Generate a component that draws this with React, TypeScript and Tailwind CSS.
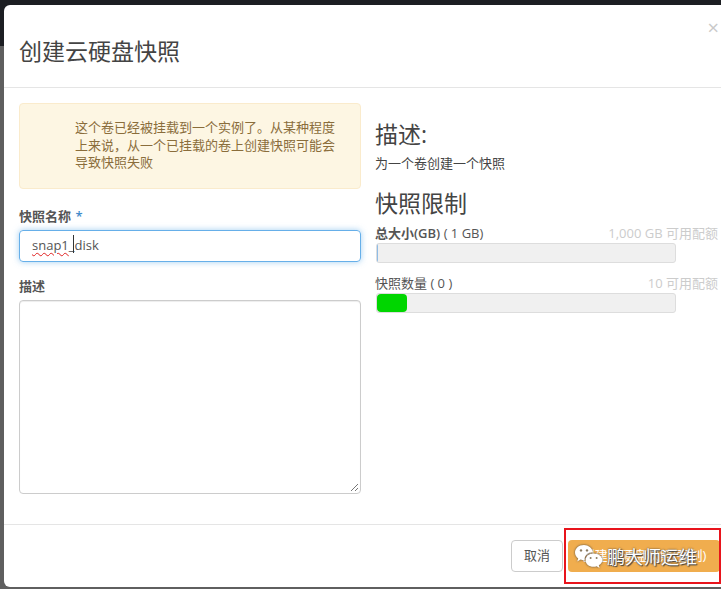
import React from "react";

const font = "font-['Open_Sans','Noto_Sans_CJK_SC',sans-serif]";

export default function App() {
  return (
    <div className={`relative h-[589px] w-[721px] overflow-hidden bg-[#5f5f5f] pt-[5px] pl-[4px] ${font}`}>
      <div className="absolute top-0 left-0 h-[46px] w-full bg-[#1c1e22]" />
      <div className="relative flex h-[582px] flex-col rounded-l-md bg-white text-[#444]">
        <Header />
        <div className="flex flex-1 gap-[15px] pt-[15px] pl-[15px]">
          <LeftForm />
          <RightInfo />
        </div>
        <Footer />
      </div>
      <Watermark />
    </div>
  );
}

const Header = () => {
  return (
    <div className="relative flex h-[83px] items-start border-b border-[#e5e5e5] pt-[28px] pl-[15px]">
      <h4 className="text-[23px] leading-[36px] text-[#444]">创建云硬盘快照</h4>
      <span className="absolute top-[11px] right-[2px] text-[20px] leading-[24px] text-[#c9c9c9]">×</span>
    </div>
  );
};

const LeftForm = () => {
  return (
    <div className="flex w-[342px] flex-col">
      <div className="h-[86px] rounded border border-[#faebcc] bg-[#fdf6e3] pt-[15px] pr-[20px] pl-[55px] text-[13px] leading-[17.5px] text-[#8a6d3b]">
        这个卷已经被挂载到一个实例了。从某种程度上来说，从一个已挂载的卷上创建快照可能会导致快照失败
      </div>
      <div className="mt-[18px] text-[13px] leading-[18px] font-semibold text-[#555]">
        快照名称 <span className="ml-[1px] text-[#428bca]">*</span>
      </div>
      <div className="mt-[5px] flex h-[32px] items-center rounded border border-[#66afe9] pl-[12px] text-[13px] text-[#555] shadow-[0_0_6px_rgba(102,175,233,0.6)]">
        <span className="underline decoration-[#e02020] decoration-wavy decoration-1 underline-offset-2">snap1</span>
        <span className="relative">
          _
          <span className="absolute top-[-1px] right-0 h-[18px] w-px bg-[#333]" />
        </span>
        <span>disk</span>
      </div>
      <div className="mt-[15px] text-[13px] leading-[18px] font-semibold text-[#555]">描述</div>
      <div className="relative mt-[5px] h-[194px] rounded border border-[#ccc] shadow-[inset_0_1px_1px_rgba(0,0,0,0.075)]">
        <svg className="absolute right-[1px] bottom-[1px]" width="9" height="9" viewBox="0 0 9 9">
          <path d="M8 1 L1 8 M8 5 L5 8" stroke="#777" strokeWidth="1" fill="none" />
        </svg>
      </div>
    </div>
  );
};

const RightInfo = () => {
  return (
    <div className="flex flex-1 flex-col">
      <h3 className="mt-[15px] -ml-px text-[23px] leading-[32px] text-[#444]">描述:</h3>
      <p className="mt-[4px] -ml-px text-[13px] leading-[18px] text-[#444]">为一个卷创建一个快照</p>
      <h3 className="mt-[15px] -ml-px text-[23px] leading-[32px] text-[#444]">快照限制</h3>
      <Quota
        className="mt-[5px]"
        label={<><b className="font-semibold">总大小(GB)</b> ( 1 GB)</>}
        available="1,000 GB 可用配额"
      >
        <div className="h-full w-px bg-[#8fbce6]" />
      </Quota>
      <Quota className="mt-[11px]" label="快照数量 ( 0 )" available="10 可用配额">
        <div className="h-full w-[30px] rounded bg-[#00d600]" />
      </Quota>
    </div>
  );
};

const Quota = ({
  className,
  label,
  available,
  children,
}: {
  className: string;
  label: React.ReactNode;
  available: string;
  children: React.ReactNode;
}) => {
  return (
    <div className={className}>
      <div className="-ml-px flex h-[18px] items-center justify-between pr-[3px] text-[13px] leading-[18px]">
        <span className="text-[#555]">{label}</span>
        <span className="text-[#ccc]">{available}</span>
      </div>
      <div className="mt-[1px] h-[20px] w-[300px] overflow-hidden rounded-[3px] border border-[#ddd] bg-[#f0f0f0]">
        {children}
      </div>
    </div>
  );
};

const Footer = () => {
  return (
    <div className="flex h-[63px] items-start gap-[5px] border-t border-[#e5e5e5] pt-[15px] pl-[507px]">
      <button className="h-[32px] w-[52px] rounded border border-[#ccc] bg-white text-[13px] text-[#555]">取消</button>
      <button className="h-[32px] w-[152px] shrink-0 rounded bg-[#f0ad4e] text-[13px] text-white">
        创建云硬盘快照(强制)
      </button>
    </div>
  );
};

const Watermark = () => {
  return (
    <div className="absolute top-[528px] left-[564px] flex h-[56px] w-[157px] items-center border-2 border-[#e8141c] pt-[1px] pl-[8px]">
      <svg width="30" height="26" viewBox="0 0 30 26" className="drop-shadow-[0_0_1px_rgba(60,60,60,0.9)]">
        <path d="M10 1 C4.5 1 1 4.6 1 8.6 C1 11 2.2 13 4.2 14.4 L3.2 17.4 L6.6 15.6 C8 16 9.2 16.2 10.6 16.1 C10.2 11.6 14 8 19 8.2 C18 4 14.4 1 10 1 Z" fill="#fff" />
        <path d="M19.5 9.6 C14.6 9.6 11.6 12.8 11.6 16.2 C11.6 19.8 15 22.8 19.5 22.8 C20.6 22.8 21.6 22.6 22.6 22.2 L25.6 24 L24.8 21.2 C27 19.8 28.4 18 28.4 16.2 C28.4 12.8 24.6 9.6 19.5 9.6 Z" fill="#fff" />
        <circle cx="7" cy="6.4" r="1.2" fill="#8a7a60" />
        <circle cx="13" cy="6.4" r="1.2" fill="#8a7a60" />
        <circle cx="16.6" cy="14" r="1" fill="#8a7a60" />
        <circle cx="22.6" cy="14" r="1" fill="#8a7a60" />
      </svg>
      <span className="ml-[3px] text-[18px] leading-[24px] text-white [text-shadow:0_0_2px_#333,1px_1px_1px_#444]">
        鹏大师运维
      </span>
    </div>
  );
};
